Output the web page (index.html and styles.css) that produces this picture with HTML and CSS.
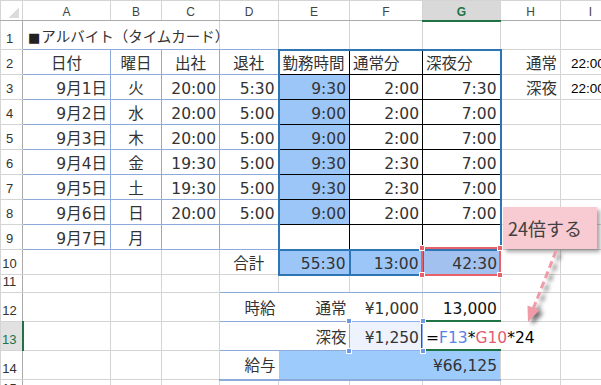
FILE: index.html
```html
<!DOCTYPE html>
<html lang="ja">
<head>
<meta charset="utf-8">
<title>アルバイト（タイムカード）</title>
<link rel="stylesheet" href="styles.css">
</head>
<body>
<div class="sheet">
<table class="grid">
<colgroup>
<col class="c-rh"><col class="c-a"><col class="c-b"><col class="c-c"><col class="c-d"><col class="c-e"><col class="c-f"><col class="c-g"><col class="c-h"><col class="c-i">
</colgroup>
<thead>
<tr class="hdr"><th class="corner"></th><th>A</th><th>B</th><th>C</th><th>D</th><th>E</th><th>F</th><th class="csel">G</th><th>H</th><th>I</th></tr>
</thead>
<tbody>
<tr class="h29"><th class="rh">1</th><td class="title nor bblb"><span class="sq">■</span>アルバイト（タイムカード）</td><td class="nor bblb"></td><td class="bblb"></td><td class="bblb"></td><td></td><td></td><td></td><td></td><td></td></tr>
<tr class="h25"><th class="rh">2</th><td class="lb ac">日付</td><td class="lb ac">曜日</td><td class="lb ac">出社</td><td class="lb ac">退社</td><td class="bk ot ol al">勤務時間</td><td class="bk ot al">通常分</td><td class="bk ot or al">深夜分</td><td class="ar">通常</td><td class="tm">22:00</td></tr>
<tr class="h25"><th class="rh">3</th><td class="lb ar">9月1日</td><td class="lb ac">火</td><td class="lb ar">20:00</td><td class="lb ar">5:30</td><td class="bk ol fill ar">9:30</td><td class="bk ar">2:00</td><td class="bk or ar">7:30</td><td class="ar">深夜</td><td class="tm">22:00</td></tr>
<tr class="h25"><th class="rh">4</th><td class="lb ar">9月2日</td><td class="lb ac">水</td><td class="lb ar">20:00</td><td class="lb ar">5:00</td><td class="bk ol fill ar">9:00</td><td class="bk ar">2:00</td><td class="bk or ar">7:00</td><td></td><td></td></tr>
<tr class="h25"><th class="rh">5</th><td class="lb ar">9月3日</td><td class="lb ac">木</td><td class="lb ar">20:00</td><td class="lb ar">5:00</td><td class="bk ol fill ar">9:00</td><td class="bk ar">2:00</td><td class="bk or ar">7:00</td><td></td><td></td></tr>
<tr class="h25"><th class="rh">6</th><td class="lb ar">9月4日</td><td class="lb ac">金</td><td class="lb ar">19:30</td><td class="lb ar">5:00</td><td class="bk ol fill ar">9:30</td><td class="bk ar">2:30</td><td class="bk or ar">7:00</td><td></td><td></td></tr>
<tr class="h25"><th class="rh">7</th><td class="lb ar">9月5日</td><td class="lb ac">土</td><td class="lb ar">19:30</td><td class="lb ar">5:00</td><td class="bk ol fill ar">9:30</td><td class="bk ar">2:30</td><td class="bk or ar">7:00</td><td></td><td></td></tr>
<tr class="h25"><th class="rh">8</th><td class="lb ar">9月6日</td><td class="lb ac">日</td><td class="lb ar">20:00</td><td class="lb ar">5:00</td><td class="bk ol fill ar">9:00</td><td class="bk ar">2:00</td><td class="bk or ar">7:00</td><td></td><td></td></tr>
<tr class="h25"><th class="rh">9</th><td class="lb ar">9月7日</td><td class="lb ac">月</td><td class="lb"></td><td class="lb"></td><td class="bk ol ob"></td><td class="bk ob"></td><td class="bk or ob"></td><td></td><td></td></tr>
<tr class="h25"><th class="rh">10</th><td></td><td></td><td></td><td class="ac">合計</td><td class="tot fill ar">55:30</td><td class="tot fill ar">13:00</td><td class="g10 ar">42:30</td><td></td><td></td></tr>
<tr class="h18"><th class="rh">11</th><td></td><td></td><td></td><td class="bblb"></td><td class="bblb"></td><td class="bblb"></td><td class="bblb"></td><td></td><td></td></tr>
<tr class="h29"><th class="rh">12</th><td></td><td></td><td></td><td class="ar bblb nor">時給</td><td class="ar bblb nor">通常</td><td class="ar bblb">¥1,000</td><td class="ar bblb dk">13,000</td><td></td><td></td></tr>
<tr class="h29"><th class="rh rsel">13</th><td></td><td></td><td></td><td class="bblb nor"></td><td class="ar bblb nor">深夜</td><td class="ar bblb f13">¥1,250</td><td class="al bblb nor dk formula">=<span class="rf-b">F13</span>*<span class="rf-r">G10</span>*24</td><td></td><td></td></tr>
<tr class="h29"><th class="rh">14</th><td></td><td></td><td></td><td class="ar bblb2 nor">給与</td><td class="ar bblb2 pay" colspan="3">¥66,125</td><td></td><td></td></tr>
<tr class="h20"><th class="rh">15</th><td></td><td></td><td></td><td></td><td></td><td></td><td></td><td></td><td></td></tr>
</tbody>
</table>

<div class="frame-green"></div>
<div class="frame-red"><i class="hd tl"></i><i class="hd tr"></i><i class="hd bl"></i><i class="hd br"></i></div>
<div class="frame-blue"><i class="hd tl"></i><i class="hd tr"></i><i class="hd bl"></i><i class="hd br"></i></div>

<div class="callout">24倍する</div>
<svg class="arrow" width="601" height="385" viewBox="0 0 601 385">
<line x1="556" y1="251" x2="533.5" y2="308" stroke="#f09ba7" stroke-width="3" stroke-dasharray="7 4"/>
<polygon points="528,322 539.5,310 527.5,305.5" fill="#f09ba7"/>
</svg>
</div>
</body>
</html>
```

FILE: styles.css
```css
html, body {
  margin: 0;
  padding: 0;
  background: #fff;
}
body {
  width: 601px;
  height: 385px;
  overflow: hidden;
}
.sheet {
  position: relative;
  width: 601px;
  height: 385px;
  overflow: hidden;
}
.grid {
  border-collapse: collapse;
  table-layout: fixed;
  width: 620px;
  font-family: "DejaVu Sans", "Noto Sans CJK JP", sans-serif;
  font-size: 15.5px;
  color: #333;
}
.c-rh { width: 22px; }
.c-a { width: 88px; }
.c-b { width: 51px; }
.c-c { width: 58px; }
.c-d { width: 59px; }
.c-e { width: 71px; }
.c-f { width: 73px; }
.c-g { width: 78px; }
.c-h { width: 60px; }
.c-i { width: 60px; }

.hdr { height: 20px; }
.h29 { height: 29px; }
.h25 { height: 25px; }
.h18 { height: 18px; }
.h20 { height: 20px; }

td, th {
  border: 1px solid #d4d4d4;
  padding: 3px 3px 0;
  white-space: nowrap;
  vertical-align: middle;
  line-height: 18px;
  overflow: visible;
}
th {
  font-family: "Liberation Sans", Arial, sans-serif;
  font-weight: normal;
  color: #444;
  background: #fff;
}
.hdr th {
  font-size: 12px;
  line-height: 14px;
  padding: 3px 0 0;
  text-align: center;
  border-bottom-color: #ababab;
}
.hdr .corner {
  background: linear-gradient(135deg, transparent 50%, #dcdcdc 50%) no-repeat right 3px bottom 2px / 10px 10px;
}
.hdr .csel {
  background: #d9d9d9;
  color: #217346;
  font-weight: bold;
  border-bottom: 2px solid #217346;
}
th.rh {
  font-size: 13px;
  line-height: 14px;
  padding: 0 4px 3px 0;
  text-align: center;
  vertical-align: bottom;
  border-right-color: #ababab;
  color: #333;
}
th.rsel {
  background: #e1e1e1;
  color: #217346;
  border-right: 2px solid #217346;
}

.title {
  font-family: "Noto Sans CJK JP", sans-serif;
  padding-left: 5px;
  font-size: 14.5px;
}
.sq {
  font-family: "DejaVu Sans", sans-serif;
  font-size: 13px;
  margin-right: 1px;
  color: #222;
}
.al { text-align: left; }
.ac { text-align: center; }
.ar { text-align: right; }
.dk { color: #111; }

.lb { border-color: #8eaadb; }
.bblb { border-bottom-color: #8eaadb; }
.bblb2 { border-bottom: 2px solid #8eaadb; }
.nor { border-right-style: hidden; }

.bk { border-color: #000; }
.ol { border-left: 2px solid #2e75b6; }
.or { border-right: 2px solid #2e75b6; }
.ot { border-top: 2px solid #2e75b6; }
.ob { border-bottom: 2px solid #2e75b6; }
.fill { background: #9dc6f8; }
.tot { border: 2px solid #2e75b6; }
.g10 { background: #a3c1ee; }
.pay { background: #9ccbfc; }
.f13 { background: #edf2fc; }

.tm {
  font-family: "Liberation Sans", Arial, sans-serif;
  font-size: 13.5px;
  color: #000;
  padding-left: 10px;
}
.formula { color: #000; }
.rf-b { color: #5a82ea; }
.rf-r { color: #e45c72; }

.frame-green {
  position: absolute;
  left: 421px;
  top: 320px;
  width: 80px;
  height: 31px;
  box-sizing: border-box;
  border: 2px solid #217346;
  border-right: none;
}
.frame-red {
  position: absolute;
  left: 421px;
  top: 247px;
  width: 80px;
  height: 29px;
  box-sizing: border-box;
  border: 2px solid #e8606a;
}
.frame-red .hd { background: #e8606a; }
.frame-blue {
  position: absolute;
  left: 349px;
  top: 321px;
  width: 74px;
  height: 30px;
  box-sizing: border-box;
  border: 1px solid #8fb0ee;
}
.frame-blue .hd { background: #6f98e8; }
.hd {
  position: absolute;
  width: 6px;
  height: 6px;
  box-sizing: border-box;
  border: 1px solid #fff;
}
.frame-red .tl { left: -4px; top: -4px; }
.frame-red .tr { right: -4px; top: -4px; }
.frame-red .bl { left: -4px; bottom: -4px; }
.frame-red .br { right: -4px; bottom: -4px; }
.frame-blue .tl { left: -4px; top: -4px; }
.frame-blue .tr { right: -4px; top: -4px; }
.frame-blue .bl { left: -4px; bottom: -4px; }
.frame-blue .br { right: -4px; bottom: -4px; }

.callout {
  position: absolute;
  left: 503px;
  top: 207px;
  width: 94px;
  height: 42px;
  box-sizing: border-box;
  padding-left: 5px;
  display: flex;
  align-items: center;
  background: #f7cbd1;
  box-shadow: 3px 3px 4px rgba(0, 0, 0, 0.35);
  font-family: "Noto Sans CJK JP", sans-serif;
  font-size: 18px;
  color: #404040;
}
.arrow {
  position: absolute;
  left: 0;
  top: 0;
  pointer-events: none;
  filter: drop-shadow(4px 3px 2px rgba(0, 0, 0, 0.55));
}
```
